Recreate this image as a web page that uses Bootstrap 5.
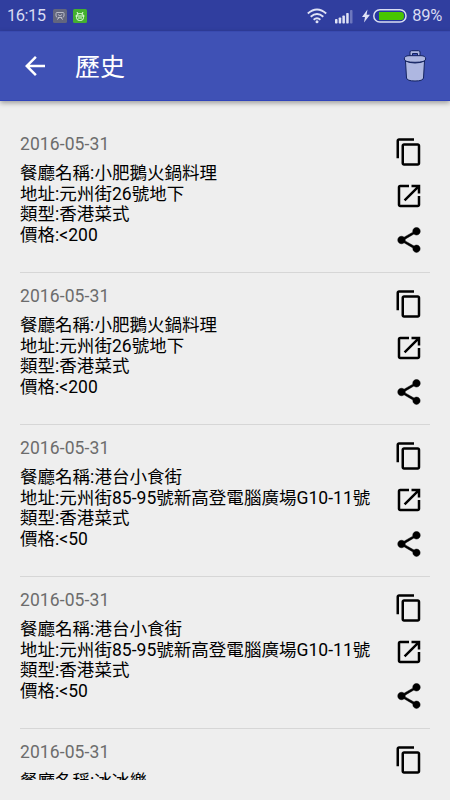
<!DOCTYPE html>
<html lang="zh-Hant">
<head>
<meta charset="utf-8">
<meta name="viewport" content="width=device-width, initial-scale=1">
<title>歷史</title>
<link href="https://cdn.jsdelivr.net/npm/bootstrap@5.3.0/dist/css/bootstrap.min.css" rel="stylesheet">
<style>
body{width:450px;height:800px;background:#eee;font-family:Roboto,"Noto Sans CJK TC",sans-serif;color:#000}
svg{display:block;flex:none}
.status-strip{height:31px;background:#303e9f;color:#d8dbf2;padding:1px 8px 0 7px;font-size:17px;line-height:30px;flex:none}
.status-strip .clock{width:46px;font-size:16.5px;letter-spacing:-.5px}
.notice-icon{margin-left:6px}
.signal{margin-left:8px}
.bolt{margin-left:9px}
.battery{margin-left:3px}
.pct{font-size:16.5px;letter-spacing:-.3px;margin-left:5px}
.app-bar{height:70px;background:#3f51b5;color:#fff;border-bottom:1px solid #3044ba;box-shadow:0 2px 5px rgba(0,0,0,.35);padding:0 19px 0 20px;flex:none;border-top:1px solid #394ab0}
.app-bar h1{font-size:25px;line-height:30px;margin:3px 0 0 25px}
.history{margin:20px 20px 20px;min-height:0}
.entry{height:152px;border-bottom:1px solid #d6d6d6;padding:13px 0 0;flex:none}
.entry time{font-size:17.5px;line-height:20px;color:#6c6c6c;letter-spacing:.1px}
.details{font-size:17.5px;line-height:20.67px;margin-top:9px;letter-spacing:.03px}
.entry .actions{gap:14px;margin:3px 6px 0 0}
</style>
<script src="https://cdn.jsdelivr.net/npm/bootstrap@5.3.0/dist/js/bootstrap.bundle.min.js"></script>
</head>
<body class="d-flex flex-column overflow-hidden m-0">
<svg class="d-none">
<symbol id="copy" viewBox="0 0 24 24"><path d="M16 1H4c-1.1 0-2 .9-2 2v14h2V3h12V1zm3 4H8c-1.1 0-2 .9-2 2v14c0 1.100.9 2 2 2h11c1.100 0 2-.9 2-2V7c0-1.100-.9-2-2-2zm0 16H8V7h11v14z"/></symbol>
<symbol id="open" viewBox="0 0 24 24"><path d="M19 19H5V5h7V3H5a2 2 0 0 0-2 2v14c0 1.100.89 2 2 2h14c1.100 0 2-.9 2-2v-7h-2v7zM14 3v2h3.590l-9.830 9.830 1.410 1.410L19 6.410V10h2V3h-7z"/></symbol>
<symbol id="share" viewBox="0 0 24 24"><path d="M18 16.080c-.76 0-1.440.3-1.960.77L8.910 12.700c.05-.23.09-.46.09-.7s-.04-.47-.09-.7l7.050-4.110c.54.5 1.250.81 2.040.81 1.660 0 3-1.340 3-3s-1.340-3-3-3-3 1.340-3 3c0 .24.04.47.09.7L8.040 9.810C7.500 9.310 6.790 9 6 9c-1.660 0-3 1.340-3 3s1.340 3 3 3c.79 0 1.500-.31 2.040-.81l7.120 4.160c-.05.21-.08.43-.08.65 0 1.610 1.310 2.920 2.920 2.920s2.920-1.310 2.920-2.920-1.310-2.920-2.920-2.920z" stroke="#000" stroke-width=".4"/></symbol>
</svg>
<div class="status-strip d-flex align-items-center">
  <span class="clock">16:15</span>
  <svg width="14" height="14" viewBox="0 0 14 14"><rect width="14" height="14" rx="1.500" fill="#62667e"/><g fill="none" stroke="#b9bbc8"><path d="M4 8.500 3 7V4.500Q3 3.500 4 3.500H10Q11 3.500 11 4.500V7L10 8.500M5 5.500 7 7 9 5.500M5 8.500H9M4 10.500 6 9M10 10.500 8 9"/></g></svg>
  <svg class="notice-icon" width="14" height="14" viewBox="0 0 14 14"><rect width="14" height="14" rx="1.500" fill="#43b02f"/><path d="M4 3 5 5M10 3 9 5M2.500 7H11.500" stroke="#e9ffe5"/><rect x="3.500" y="4.500" width="7" height="7" rx="3" fill="none" stroke="#e9ffe5"/><path d="M5 9H9" stroke="#e9ffe5"/></svg>
  <svg class="ms-auto" width="20" height="16" viewBox="0 0 20 16" fill="none" stroke="#dfe2f5" stroke-width="1.900"><path d="M.8 5.500Q10-2.600 19.200 5.500M3.700 8.700Q10 3.400 16.300 8.700M6.600 11.700Q10 9 13.400 11.700"/><circle cx="10" cy="13.700" r="1.500" fill="#dfe2f5" stroke="none"/></svg>
  <svg class="signal" width="18" height="15" viewBox="0 0 18 15" fill="#dfe2f5"><rect y="10" width="2.500" height="4.500" rx=".7"/><rect x="3.700" y="8.500" width="2.500" height="6" rx=".7"/><rect x="7.400" y="6.500" width="2.500" height="8" rx=".7"/><rect x="11.200" y="4" width="2.500" height="10.500" rx=".7"/><rect x="15" y="1" width="2.500" height="13.500" rx=".7" opacity=".35"/></svg>
  <svg class="bolt" width="8" height="14" viewBox="0 0 8 14"><path d="M5.500.5 0 8h3L2 13.500 8 5.700H4.600z" fill="#dfe2f5"/></svg>
  <svg class="battery" width="34" height="14" viewBox="0 0 34 14"><rect x=".8" y=".8" width="32.200" height="12.200" rx="6.100" fill="#2536a0" stroke="#dadef2" stroke-width="1.500"/><path d="M6 3H28Q31 3 31 7T28 11H6Z" fill="#48c500"/></svg>
  <span class="pct">89%</span>
</div>
<header class="app-bar d-flex align-items-center position-relative">
  <svg width="30" height="30" viewBox="0 0 24 24" fill="#fff"><path d="M20 11H7.830l5.590-5.590L12 4l-8 8 8 8 1.410-1.410L7.830 13H20v-2z"/></svg>
  <h1 class="fw-normal">歷史</h1>
  <svg class="ms-auto" width="32" height="32" viewBox="0 0 32 32" fill="#aeb7e1" stroke="#14235f" stroke-width="1"><path d="M11 6V2Q11 .7 12.500 .7H19.500Q21 .7 21 2V6H18.500V3.500H13.500V6Z"/><path d="M6.500 11 7.500 28Q8 31 16 31T24.500 28L25.500 11Q21 13 16 13T6.500 11Z"/><path d="M5.300 9Q5.300 5.700 10 5.700H22Q26.700 5.700 26.700 9 26.700 12.300 16 12.300T5.300 9Z"/></svg>
</header>
<main class="history d-flex flex-column flex-grow-1 overflow-hidden" id="history"></main>
<script>
const places = [
  ["小肥鵝火鍋料理", "元州街26號地下", "<200"],
  ["小肥鵝火鍋料理", "元州街26號地下", "<200"],
  ["港台小食街", "元州街85-95號新高登電腦廣場G10-11號", "<50"],
  ["港台小食街", "元州街85-95號新高登電腦廣場G10-11號", "<50"],
  ["冰冰樂", "", ""]
];
const icon = id => `<svg width="30" height="30"><use href="#${id}"/></svg>`;
document.getElementById("history").innerHTML = places.map(([name, address, price]) => `
<article class="entry d-flex justify-content-between">
  <div class="text-nowrap"><time class="d-block">2016-05-31</time>
    <div class="details"><div>餐廳名稱:${name}</div>${address ? `<div>地址:${address}</div><div>類型:香港菜式</div><div>價格:${price.replace("<", "&lt;")}</div>` : ""}</div></div>
  <div class="actions d-flex flex-column">${icon("copy")}${icon("open")}${icon("share")}</div>
</article>`).join("");
</script>
</body>
</html>
